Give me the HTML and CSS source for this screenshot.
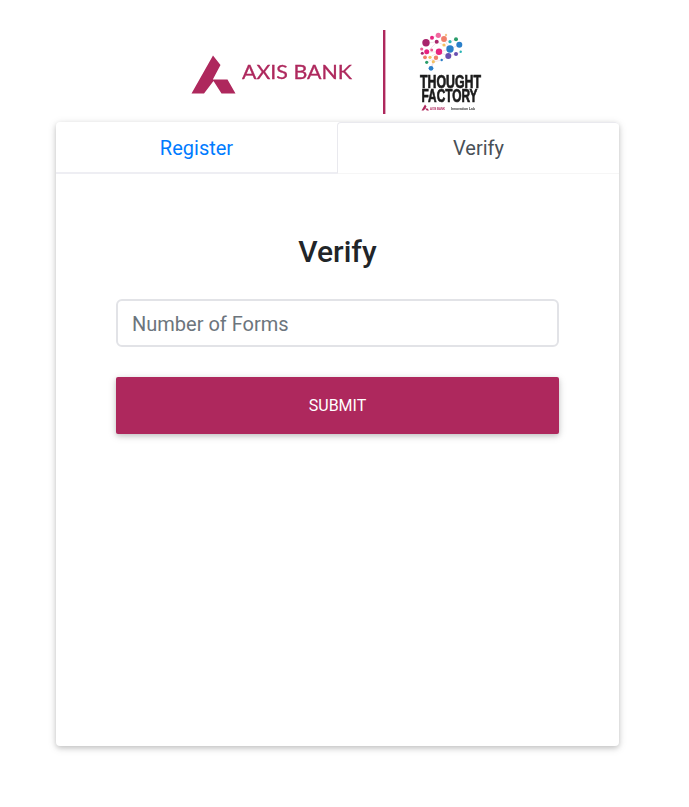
FILE: index.html
```html
<!DOCTYPE html>
<html lang="en">
<head>
    <meta charset="UTF-8">
    <title>Verify</title>
    <link rel="stylesheet" href="styles.css">
</head>
<body>
    <div class="page">
        <div class="logo-row">
            <svg class="logo" viewBox="189 28 320 88" width="320" height="88" role="img" aria-label="Axis Bank Thought Factory">
                <path class="axis-mark" d="M191.5 93.5L213 55.5L220.5 65L212.8 79.5H227.5L235.5 93.5H221.5L213.5 81L204 93.5Z"/>
                <text class="axis-name" x="242" y="79" textLength="110" lengthAdjust="spacingAndGlyphs">AXIS BANK</text>
                <rect class="axis-mark" x="383" y="30" width="2.4" height="84"/>
                <g class="brain-lines">
                    <path d="M426 43L432 38L438 35L444 39L450 42L456 39M444 39L450 49L459 45M426 43L437 42L444 45L450 49M427 52L437 42M427 52L439 52L450 49L448 56L456 54L461 52M439 52L436 58L431 68M425 57L427 52M430 57L439 52L448 56L442 60L433 62L431 68M427 62L436 58"/>
                </g>
                <circle cx="438.3" cy="35.3" r="2.6" fill="#f06aa0"/>
                <circle cx="432" cy="37.7" r="2" fill="#e8237f"/>
                <circle cx="446" cy="35" r="1.2" fill="#f5c48a"/>
                <circle cx="444" cy="39" r="2.9" fill="#f07f6a"/>
                <circle cx="456" cy="39.3" r="2" fill="#2a9d6a"/>
                <circle cx="450" cy="41.7" r="1.6" fill="#2ab5b5"/>
                <circle cx="426" cy="42.7" r="3.7" fill="#a8246b"/>
                <circle cx="436.7" cy="41.7" r="2" fill="#a8246b"/>
                <circle cx="459.3" cy="44.7" r="3" fill="#2a7fc9"/>
                <circle cx="450" cy="49" r="3.7" fill="#2a7fc9"/>
                <circle cx="444" cy="45" r="1.6" fill="#f5c060"/>
                <circle cx="421.7" cy="49" r="1.6" fill="#e85a90"/>
                <circle cx="426.7" cy="51.7" r="2.5" fill="#e8237f"/>
                <circle cx="439" cy="51.7" r="3.2" fill="#e8237f"/>
                <circle cx="431.7" cy="50" r="1.5" fill="#e85a90"/>
                <circle cx="422.3" cy="53.3" r="1.5" fill="#a8246b"/>
                <circle cx="448.3" cy="56" r="3" fill="#6a4fb0"/>
                <circle cx="456" cy="54" r="2" fill="#6a4fb0"/>
                <circle cx="460.7" cy="51.7" r="1.2" fill="#2ab5b5"/>
                <circle cx="425" cy="57.3" r="1.9" fill="#f07f6a"/>
                <circle cx="430" cy="57.3" r="1.6" fill="#f5c060"/>
                <circle cx="436" cy="57.7" r="2.2" fill="#f07f6a"/>
                <circle cx="441.7" cy="60" r="1.2" fill="#2a7fc9"/>
                <circle cx="426.7" cy="62.3" r="1.6" fill="#2a9d6a"/>
                <circle cx="433.3" cy="61.7" r="1.6" fill="#f5c060"/>
                <circle cx="431" cy="68.3" r="2.4" fill="#2a7fc9"/>
                <text class="tf-name" x="420" y="87.5" textLength="61" lengthAdjust="spacingAndGlyphs">THOUGHT</text>
                <text class="tf-name" x="421.5" y="101.5" textLength="56" lengthAdjust="spacingAndGlyphs">FACTORY</text>
                <path class="axis-mark" d="M421.5 110.5L425 104.5L426.5 106.5L425.3 108.5H427.5L429 110.5H426.8L425.3 108.8L423.6 110.5Z"/>
                <text class="tf-small" x="430" y="110" textLength="15" lengthAdjust="spacingAndGlyphs" fill="#ae285d">AXIS BANK</text>
                <text class="tf-small" x="451" y="110" textLength="24" lengthAdjust="spacingAndGlyphs" fill="#333">Innovation Lab</text>
            </svg>
        </div>
        <div class="card">
            <ul class="tabs">
                <li class="tab">Register</li>
                <li class="tab active">Verify</li>
            </ul>
            <form class="card-body">
                <h3 class="title">Verify</h3>
                <input class="field" type="text" placeholder="Number of Forms">
                <button class="submit" type="button">SUBMIT</button>
            </form>
        </div>
    </div>
</body>
</html>
```

FILE: styles.css
```css
*{
    margin:0;
    padding:0;
    box-sizing: border-box;
}
body{
    background-color: #fff;
    font-family: Roboto, "Liberation Sans", sans-serif;
}
.page{
    width: 563px;
    margin-left: 56px;
    padding-bottom: 61px;
}
.logo-row{
    padding: 28px 0 0 133px;
    height: 122px;
}
.logo{
    display: block;
    filter: blur(.3px);
}
.axis-mark{
    fill: #ae285d;
}
.axis-name{
    font-family: Lato, "Open Sans", sans-serif;
    font-size: 19.5px;
    fill: #ae285d;
    stroke: #ae285d;
    stroke-width: .3;
}
.brain-lines path{
    fill: none;
    stroke: #e9c9d6;
    stroke-width: .5;
}
.tf-name{
    font-family: "Liberation Sans Narrow", "Liberation Sans", sans-serif;
    font-weight: bold;
    font-size: 17.5px;
    fill: #1c1c1c;
    stroke: #1c1c1c;
    stroke-width: .7;
}
.tf-small{
    font-family: "Liberation Sans", sans-serif;
    font-weight: bold;
    font-size: 3.6px;
}
.card{
    height: 624px;
    background-color: #fff;
    border-radius: 4px;
    box-shadow: 0 2px 5px rgba(0,0,0,.16), 0 2px 10px rgba(0,0,0,.12);
    overflow: hidden;
}
.tabs{
    display: flex;
    list-style: none;
    height: 52px;
}
.tab{
    flex: 1;
    color: #007bff;
    font-size: 20px;
    line-height: 52px;
    height: 52px;
    text-align: center;
    border-bottom: 2px solid #eeeef3;
}
.active{
    line-height: 50px;
    color: #495057;
    border: 1px solid #e9e9ee;
    border-bottom-color: #f6f6f6;
    border-right: 0;
    border-radius: 4px 4px 0 0;
}
.card-body{
    display: flex;
    flex-direction: column;
    padding: 0 60px;
}
.title{
    margin-top: 60px;
    font-size: 30px;
    font-weight: 500;
    line-height: 36px;
    text-align: center;
    color: #212529;
}
.field{
    width: 100%;
    height: 48px;
    margin-top: 29px;
    padding: 2px 14px 0;
    border: 2px solid #e2e3e7;
    border-radius: 6px;
    font-family: inherit;
    font-size: 20px;
    color: #495057;
    outline: none;
}
.field::placeholder{
    color: #6c757d;
    opacity: 1;
}
.submit{
    height: 57px;
    margin-top: 30px;
    border: 0;
    border-radius: 2px;
    background-color: #ae285d;
    color: #fff;
    font-family: inherit;
    font-size: 16px;
    box-shadow: 0 2px 5px rgba(0,0,0,.16), 0 2px 10px rgba(0,0,0,.12);
}
```
